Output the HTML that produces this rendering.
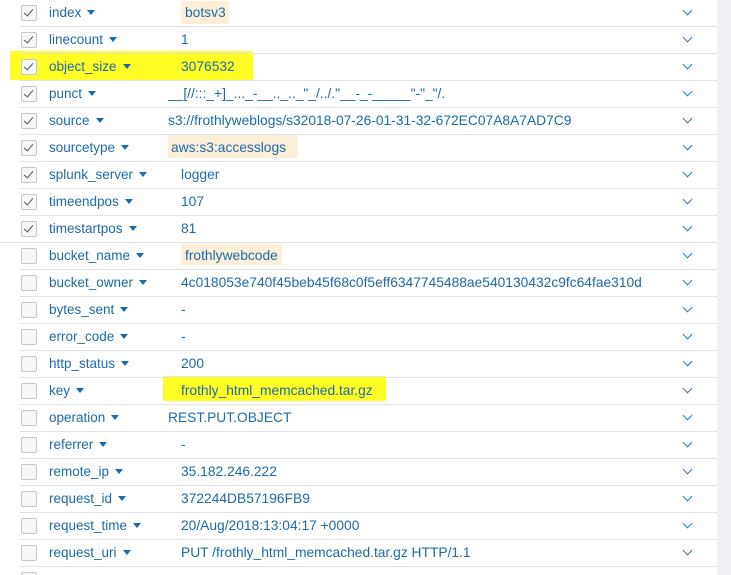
<!DOCTYPE html><html><head><style>
html,body{margin:0;width:731px;height:575px;overflow:hidden}
body{background:#fff;font-family:"Liberation Sans",sans-serif;font-size:13.5px;color:#1d6aa8;position:relative}
.side{position:absolute;left:717px;top:0;width:14px;height:575px;background:#eef0f3}
.row{position:absolute;left:0;width:717px;height:27px}
.sep{position:absolute;left:20px;right:0;bottom:0;height:1px;background:#dfe2e6}
.cb{position:absolute;left:21px;top:5px;width:14px;height:14px;border:1px solid #c3c7cc;border-radius:2px;background:#f6f7f8}
.cb.c::after{content:"";position:absolute;left:4px;top:1px;width:4px;height:8px;border:solid #555;border-width:0 1.5px 1.5px 0;transform:rotate(40deg)}
.n{position:absolute;left:49px;top:5px;white-space:nowrap}
.n::after{content:"";display:inline-block;margin-left:6px;border:4px solid transparent;border-top:5px solid #1d6aa8;border-bottom:0;vertical-align:2px}
.v{position:absolute;top:5px;white-space:nowrap;font-size:13.8px}
.ch{position:absolute;left:684px;top:7px;width:6px;height:6px;border:solid #2b7bc0;border-width:0 1.5px 1.5px 0;transform:rotate(45deg)}
.hl{position:absolute;background:#fcefd9}
.y{position:absolute;background:#ffff00;opacity:.85}
</style></head><body>
<div class="side"></div>
<div class="hl" style="left:181px;top:1px;width:48px;height:23px"></div>
<div class="hl" style="left:168px;top:134px;width:130px;height:24px"></div>
<div class="hl" style="left:181px;top:244px;width:101px;height:21px"></div>
<div class="y" style="left:10px;top:51px;width:243px;height:29px"></div>
<div class="y" style="left:163px;top:376px;width:223px;height:25px"></div>

<div class="row" style="top:0"><div class="cb c"></div><div class="n">index</div><div class="v" style="left:185px">botsv3</div><div class="ch"></div><div class="sep"></div></div>
<div class="row" style="top:27px"><div class="cb c"></div><div class="n">linecount</div><div class="v" style="left:181px">1</div><div class="ch"></div><div class="sep"></div></div>
<div class="row" style="top:54px"><div class="cb c"></div><div class="n">object_size</div><div class="v" style="left:181px">3076532</div><div class="ch"></div><div class="sep"></div></div>
<div class="row" style="top:81px"><div class="cb c"></div><div class="n">punct</div><div class="v" style="left:168px">__[//:::_+]_..._-__.._.._"_/../."__-_-_____"-"_"/.</div><div class="ch"></div><div class="sep"></div></div>
<div class="row" style="top:108px"><div class="cb c"></div><div class="n">source</div><div class="v" style="left:168px">s3://frothlyweblogs/s32018-07-26-01-31-32-672EC07A8A7AD7C9</div><div class="ch"></div><div class="sep"></div></div>
<div class="row" style="top:135px"><div class="cb c"></div><div class="n">sourcetype</div><div class="v" style="left:171px">aws:s3:accesslogs</div><div class="ch"></div><div class="sep"></div></div>
<div class="row" style="top:162px"><div class="cb c"></div><div class="n">splunk_server</div><div class="v" style="left:181px">logger</div><div class="ch"></div><div class="sep"></div></div>
<div class="row" style="top:189px"><div class="cb c"></div><div class="n">timeendpos</div><div class="v" style="left:181px">107</div><div class="ch"></div><div class="sep"></div></div>
<div class="row" style="top:216px"><div class="cb c"></div><div class="n">timestartpos</div><div class="v" style="left:181px">81</div><div class="ch"></div><div class="sep" style="left:0"></div></div>
<div class="row" style="top:243px"><div class="cb"></div><div class="n">bucket_name</div><div class="v" style="left:185px">frothlywebcode</div><div class="ch"></div><div class="sep"></div></div>
<div class="row" style="top:270px"><div class="cb"></div><div class="n">bucket_owner</div><div class="v" style="left:181px">4c018053e740f45beb45f68c0f5eff6347745488ae540130432c9fc64fae310d</div><div class="ch"></div><div class="sep"></div></div>
<div class="row" style="top:297px"><div class="cb"></div><div class="n">bytes_sent</div><div class="v" style="left:181px">-</div><div class="ch"></div><div class="sep"></div></div>
<div class="row" style="top:324px"><div class="cb"></div><div class="n">error_code</div><div class="v" style="left:181px">-</div><div class="ch"></div><div class="sep"></div></div>
<div class="row" style="top:351px"><div class="cb"></div><div class="n">http_status</div><div class="v" style="left:181px">200</div><div class="ch"></div><div class="sep"></div></div>
<div class="row" style="top:378px"><div class="cb"></div><div class="n">key</div><div class="v" style="left:181px">frothly_html_memcached.tar.gz</div><div class="ch"></div><div class="sep"></div></div>
<div class="row" style="top:405px"><div class="cb"></div><div class="n">operation</div><div class="v" style="left:168px">REST.PUT.OBJECT</div><div class="ch"></div><div class="sep"></div></div>
<div class="row" style="top:432px"><div class="cb"></div><div class="n">referrer</div><div class="v" style="left:181px">-</div><div class="ch"></div><div class="sep"></div></div>
<div class="row" style="top:459px"><div class="cb"></div><div class="n">remote_ip</div><div class="v" style="left:181px">35.182.246.222</div><div class="ch"></div><div class="sep"></div></div>
<div class="row" style="top:486px"><div class="cb"></div><div class="n">request_id</div><div class="v" style="left:181px">372244DB57196FB9</div><div class="ch"></div><div class="sep"></div></div>
<div class="row" style="top:513px"><div class="cb"></div><div class="n">request_time</div><div class="v" style="left:181px">20/Aug/2018:13:04:17 +0000</div><div class="ch"></div><div class="sep"></div></div>
<div class="row" style="top:540px"><div class="cb"></div><div class="n">request_uri</div><div class="v" style="left:181px">PUT /frothly_html_memcached.tar.gz HTTP/1.1</div><div class="ch"></div><div class="sep"></div></div>
<div class="row" style="top:567px"><div class="cb"></div></div>
</body></html>
